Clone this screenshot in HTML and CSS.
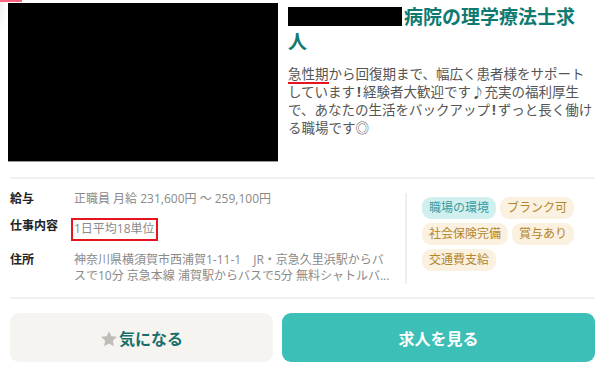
FILE: index.html
```html
<!DOCTYPE html>
<html lang="ja">
<head>
    <meta charset="UTF-8">
    <meta name="viewport" content="width=device-width, initial-scale=1.0">
    <title>求人カード</title>
    <link rel="stylesheet" href="styles.css">
</head>
<body>
    <div class="card">
        <span class="corner-ribbon"></span>

        <div class="summary">
            <div class="thumb"></div>
            <div class="summary-body">
                <h2 class="job-title"><span class="redacted"></span>病院の理学療法士求人</h2>
                <p class="lead"><span class="marked">急性期</span>から回復期まで、幅広く患者様をサポート<br>しています<span class="bang">!</span>経験者大歓迎です♪充実の福利厚生<br>で、あなたの生活をバックアップ<span class="bang">!</span>ずっと長く働け<br>る職場です◎</p>
            </div>
        </div>

        <div class="details">
            <dl class="info">
                <div class="info-row">
                    <dt>給与</dt>
                    <dd>正職員 月給 231,600円 ～ 259,100円</dd>
                </div>
                <div class="info-row">
                    <dt>仕事内容</dt>
                    <dd><span class="boxed">1日平均18単位</span></dd>
                </div>
                <div class="info-row">
                    <dt>住所</dt>
                    <dd class="clamp">神奈川県横須賀市西浦賀1-11-1　JR・京急久里浜駅からバスで10分 京急本線 浦賀駅からバスで5分 無料シャトルバ...</dd>
                </div>
            </dl>
            <div class="tags">
                <span class="tag tag-env">職場の環境</span>
                <span class="tag">ブランク可</span>
                <span class="tag">社会保険完備</span>
                <span class="tag">賞与あり</span>
                <span class="tag">交通費支給</span>
            </div>
        </div>

        <div class="actions">
            <button class="btn btn-keep" type="button">
                <svg class="star" width="18" height="18" viewBox="0 0 24 24"><path d="M12 1.5l3.2 6.7 7.3.9-5.4 5.1 1.4 7.3L12 17.9l-6.5 3.6 1.4-7.3-5.4-5.1 7.3-.9z" fill="#bdbcb8"/></svg>気になる
            </button>
            <button class="btn btn-view" type="button">求人を見る</button>
        </div>
    </div>
</body>
</html>
```

FILE: styles.css
```css
body {
    margin: 0;
    background-color: #fff;
    font-family: "Open Sans", "Noto Sans CJK JP", sans-serif;
    color: #333;
}

.card {
    position: relative;
    width: 600px;
    box-sizing: border-box;
    padding: 3px 5px 0 8px;
}

.corner-ribbon {
    position: absolute;
    top: 0;
    left: 0;
    width: 22px;
    height: 30px;
    border-top: 2px solid #ff5f7e;
    background: linear-gradient(90deg, rgba(0, 0, 0, 0.08), rgba(0, 0, 0, 0) 8px);
    -webkit-mask-image: linear-gradient(180deg, #000, transparent);
}

.summary {
    display: flex;
    gap: 10px;
}

.thumb {
    flex: 0 0 270px;
    height: 158px;
    background-color: #000;
    border-bottom: 1px solid #9a9a9a;
}

.summary-body {
    flex: 1;
    margin-top: 2px;
}

.job-title {
    margin: 0;
    width: 300px;
    font-size: 19px;
    line-height: 25px;
    font-weight: bold;
    color: #0e7a72;
}

.redacted {
    display: inline-block;
    width: 114px;
    height: 19px;
    margin-right: 2px;
    background-color: #000;
    vertical-align: -2px;
}

.lead {
    margin: 10px 0 0;
    font-size: 13.5px;
    line-height: 18px;
    color: #555;
    white-space: nowrap;
}

.marked {
    padding-bottom: 1px;
    background: linear-gradient(#e8141d, #e8141d) no-repeat left bottom / 100% 2px;
}

.bang {
    margin: 0 2px;
    font-weight: bold;
}

.details {
    display: flex;
    margin: 15px 0 0 2px;
    padding: 12px 0 13px;
    border-top: 2px solid #f2f1ed;
    border-bottom: 2px solid #f2f1ed;
}

.info {
    flex: 1;
    margin: 0;
    display: flex;
    flex-direction: column;
    gap: 11px;
}

.info-row {
    display: flex;
    font-size: 12px;
    line-height: 16px;
}

.info-row dt {
    flex: 0 0 64px;
    font-weight: bold;
    color: #222;
}

.info-row dd {
    margin: 0;
    width: 318px;
    color: #8a8a8a;
}

.boxed {
    display: inline-block;
    margin-left: -3px;
    padding: 1px 1px 2px;
    border: 2px solid #e8141d;
}

.clamp {
    display: -webkit-box;
    -webkit-box-orient: vertical;
    -webkit-line-clamp: 2;
    overflow: hidden;
}

.tags {
    flex: 0 0 173px;
    display: flex;
    flex-wrap: wrap;
    align-content: flex-start;
    gap: 4px;
    margin: 2px 0 0 10px;
    padding: 4px 0 10px 15px;
    border-left: 2px solid #f0efeb;
}

.tag {
    display: inline-block;
    padding: 3px 7px;
    border-radius: 9px;
    font-size: 12px;
    line-height: 16px;
    background-color: #fbf1e1;
    color: #b3852a;
}

.tag-env {
    background-color: #d2eff0;
    color: #3a9c9c;
}

.actions {
    display: grid;
    grid-template-columns: 263px 1fr;
    gap: 9px;
    margin: 14px 0 0 2px;
}

.btn {
    height: 49px;
    border: none;
    border-radius: 9px;
    font-family: inherit;
    font-size: 16px;
    font-weight: bold;
    cursor: pointer;
}

.btn-keep {
    background-color: #f5f4f0;
    color: #176e69;
}

.btn-keep .star {
    vertical-align: -3px;
    margin-right: 1px;
}

.btn-view {
    background-color: #3bbfb7;
    color: #fff;
}
```
